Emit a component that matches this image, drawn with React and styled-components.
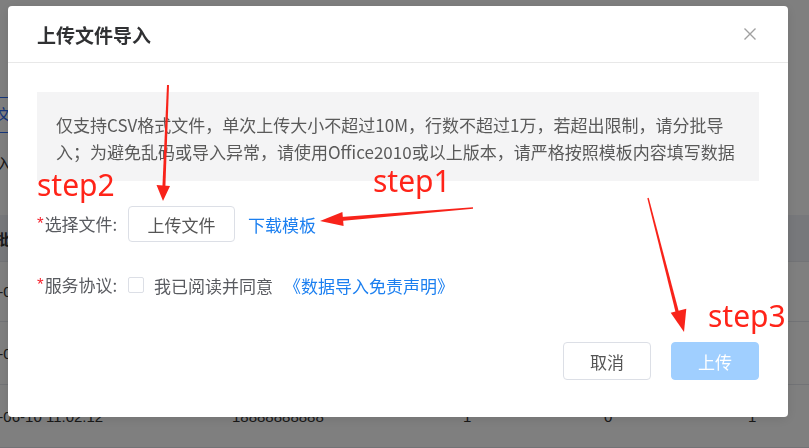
import React from 'react';
import styled, { createGlobalStyle } from 'styled-components';

const GlobalStyle = createGlobalStyle`
  html, body {
    margin: 0;
    padding: 0;
    background: #fff;
    overflow: hidden;
  }
  body {
    font-family: "Noto Sans CJK SC", "Noto Sans", sans-serif;
  }
`;

/* page behind the dialog */
const Page = styled.div`
  width: 900px;
  height: 448px;
  margin-left: -40px;
  padding-top: 97px;
  box-sizing: border-box;
  color: #333;
  font-size: 15px;
  font-family: "Liberation Sans", "Noto Sans CJK SC", sans-serif;
`;

const Toolbar = styled.div`
  display: flex;
  height: 36px;
`;

const OutlineButton = styled.div`
  box-sizing: border-box;
  height: 36px;
  padding: 0 12px 0 5px;
  border: 1px solid #2d6df6;
  color: #2d6df6;
  line-height: 34px;
`;

const SubLine = styled.div`
  margin-top: 17px;
  padding-left: 20px;
  font-size: 16px;
  line-height: 30px;
`;

const Table = styled.div`
  margin-top: 35px;
`;

const Row = styled.div`
  display: grid;
  grid-template-columns: 272px 231px 141px 144px 1fr;
  align-items: center;
  height: ${(p) => p.$h}px;
  box-sizing: border-box;
  border-bottom: 1px solid #e4e7ed;
  background: ${(p) => (p.$head ? '#eef1f6' : '#fff')};
  font-weight: ${(p) => (p.$head ? 700 : 400)};
`;

const Cell = styled.div`
  padding-left: ${(p) => (p.$first ? '5px' : '0')};
  white-space: nowrap;
`;

const Mask = styled.div`
  position: fixed;
  inset: 0;
  background: rgba(0, 0, 0, 0.5);
`;

/* dialog */
const Dialog = styled.div`
  position: fixed;
  top: 6px;
  left: 8px;
  width: 780px;
  height: 411px;
  display: flex;
  flex-direction: column;
  background: #fff;
  border-radius: 4px;
  box-shadow: 0 2px 12px rgba(0, 0, 0, 0.1);
  font-family: "Noto Sans CJK SC", "Noto Sans", sans-serif;
`;

const DialogHeader = styled.div`
  flex: none;
  height: 56px;
  display: flex;
  align-items: center;
  justify-content: space-between;
  padding: 0 32px 0 29px;
  border-bottom: 1px solid #e8e8e8;
`;

const DialogTitle = styled.h3`
  margin: 0;
  font-size: 19px;
  font-weight: 700;
  line-height: 1;
  color: #303133;
`;

const CloseButton = styled.button`
  display: flex;
  padding: 0;
  border: none;
  background: none;
  cursor: pointer;
`;

const DialogBody = styled.div`
  padding: 29px 29px 0;
`;

const Notice = styled.div`
  padding: 19px 19px 16px;
  background: #f4f4f5;
  color: #5a5a5a;
  font-size: 17px;
  line-height: 27px;
  white-space: nowrap;
`;

const FormRow = styled.div`
  display: flex;
  align-items: center;
  height: 36px;
  margin-top: 25px;
  font-size: 17px;
  color: #595b60;
`;

const Label = styled.label`
  flex: none;
  width: 91px;
  line-height: 36px;
  white-space: nowrap;
`;

const Required = styled.span`
  color: #f5222d;
  font-family: "Liberation Sans", sans-serif;
  font-size: 17px;
  margin-right: 1px;
  vertical-align: 2px;
`;

const PlainButton = styled.button`
  box-sizing: border-box;
  width: 107px;
  height: 36px;
  border: 1px solid #dcdfe6;
  border-radius: 4px;
  background: #fff;
  color: #555;
  font-family: inherit;
  font-size: 17px;
  cursor: pointer;
`;

const Link = styled.a`
  margin-left: ${(p) => p.$gap}px;
  color: #1b7ff0;
  text-decoration: none;
  white-space: nowrap;
  cursor: pointer;
`;

const Checkbox = styled.span`
  box-sizing: border-box;
  width: 16px;
  height: 16px;
  border: 1px solid #dcdfe6;
  border-radius: 2px;
  background: #fff;
`;

const AgreeText = styled.span`
  margin-left: 10px;
  white-space: nowrap;
`;

const DialogFooter = styled.div`
  margin-top: auto;
  display: flex;
  justify-content: flex-end;
  gap: 20px;
  padding: 0 29px 37px;
`;

const FooterButton = styled.button`
  box-sizing: border-box;
  width: 88px;
  height: 38px;
  border-radius: 4px;
  border: 1px solid ${(p) => (p.$primary ? '#a0cfff' : '#dcdfe6')};
  background: ${(p) => (p.$primary ? '#a0cfff' : '#fff')};
  color: ${(p) => (p.$primary ? '#fff' : '#555')};
  font-family: inherit;
  font-size: 17px;
  cursor: ${(p) => (p.$primary ? 'not-allowed' : 'pointer')};
`;

/* red hand-drawn annotations on top of the screenshot */
const Annotations = styled.div`
  position: fixed;
  inset: 0;
  pointer-events: none;
`;

const StepLabel = styled.span`
  position: absolute;
  left: ${(p) => p.$x}px;
  top: ${(p) => p.$y}px;
  color: #ff2419;
  font-family: "Noto Sans", "Open Sans", sans-serif;
  font-size: 30px;
  line-height: 30px;
  white-space: nowrap;
`;

const ArrowLayer = styled.svg`
  position: absolute;
  left: 0;
  top: 0;
`;

const tableRows = [
  { h: 60, cells: ['2020-06-10 11:02:12', '18888888888', '1', '0', '1'] },
  { h: 63, cells: ['2020-06-10 11:02:12', '18888888888', '1', '0', '1'] },
  { h: 63, cells: ['2020-06-10 11:02:12', '18888888888', '1', '0', '1'] },
];

const App = () => {
  return (
    <>
      <GlobalStyle />
      <Page>
        <Toolbar>
          <OutlineButton>导入文件</OutlineButton>
        </Toolbar>
        <SubLine>导入</SubLine>
        <Table>
          <Row $head $h={47}>
            <Cell $first>导入批次</Cell>
            <Cell>手机号</Cell>
            <Cell>成功</Cell>
            <Cell>失败</Cell>
            <Cell>状态</Cell>
          </Row>
          {tableRows.map((r, i) => (
            <Row key={i} $h={r.h}>
              {r.cells.map((c, j) => (
                <Cell key={j} $first={j === 0}>{c}</Cell>
              ))}
            </Row>
          ))}
        </Table>
      </Page>

      <Mask />

      <Dialog>
        <DialogHeader>
          <DialogTitle>上传文件导入</DialogTitle>
          <CloseButton aria-label="关闭">
            <svg width="12" height="12" viewBox="0 0 12 12">
              <path d="M0.5 0.5 L11.5 11.5 M11.5 0.5 L0.5 11.5" stroke="#a0a0a0" strokeWidth="1.4" fill="none" />
            </svg>
          </CloseButton>
        </DialogHeader>

        <DialogBody>
          <Notice>
            仅支持CSV格式文件，单次上传大小不超过10M，行数不超过1万，若超出限制，请分批导
            <br />
            入；为避免乱码或导入异常，请使用Office2010或以上版本，请严格按照模板内容填写数据
          </Notice>

          <FormRow>
            <Label><Required>*</Required>选择文件:</Label>
            <PlainButton>上传文件</PlainButton>
            <Link $gap={13}>下载模板</Link>
          </FormRow>

          <FormRow>
            <Label><Required>*</Required>服务协议:</Label>
            <Checkbox />
            <AgreeText>我已阅读并同意</AgreeText>
            <Link $gap={11}>《数据导入免责声明》</Link>
          </FormRow>
        </DialogBody>

        <DialogFooter>
          <FooterButton>取消</FooterButton>
          <FooterButton $primary>上传</FooterButton>
        </DialogFooter>
      </Dialog>

      <Annotations>
        <ArrowLayer width="809" height="448" viewBox="0 0 809 448">
          <g fill="#f8231a">
            {/* step2 arrow */}
            <polygon points="167,85 169,85 165.3,189 162.3,189" />
            <polygon points="156.5,185 170,186 163,201" />
            {/* step1 arrow */}
            <polygon points="473,207.3 473,208.7 341,221 341,217" />
            <polygon points="320,221 342.4,212 343.6,226" />
            {/* step3 arrow */}
            <polygon points="647.3,198.2 648.7,197.8 679.6,314.6 676.4,315.4" />
            <polygon points="684,332 686.3,308.7 670.7,312.7" />
          </g>
        </ArrowLayer>
        <StepLabel $x={37} $y={170}>step2</StepLabel>
        <StepLabel $x={373} $y={166}>step1</StepLabel>
        <StepLabel $x={708} $y={301}>step3</StepLabel>
      </Annotations>
    </>
  );
};

export default App;
